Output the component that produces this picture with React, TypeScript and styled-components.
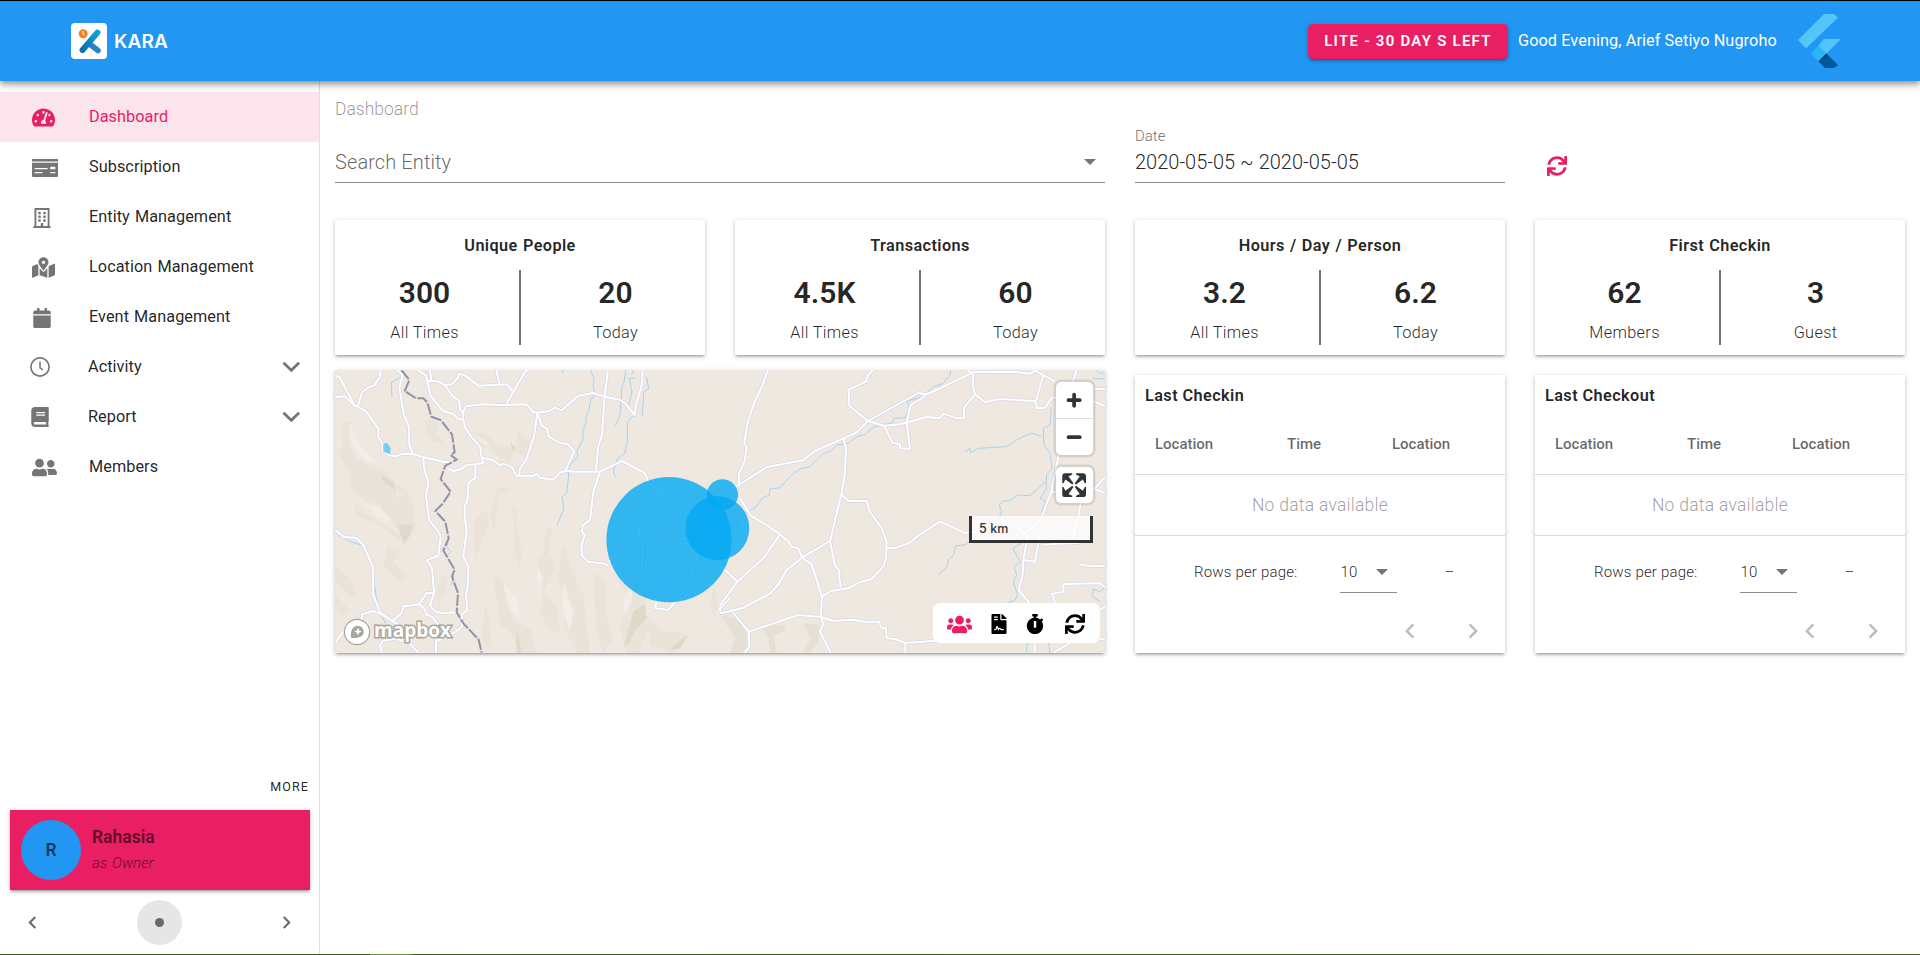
import React from "react";
import styled, { createGlobalStyle, css } from "styled-components";
import {
  FaSync,
  FaTachometerAlt,
  FaMoneyCheck,
  FaMapMarkedAlt,
  FaCalendar,
  FaBook,
  FaUserFriends,
  FaUsers,
  FaRegBuilding,
  FaStopwatch,
  FaFileContract,
} from "react-icons/fa";

const color = {
  primary: "#2196f3",
  accent: "#e91e63",
  text: "rgba(0, 0, 0, 0.87)",
  secondary: "rgba(0, 0, 0, 0.6)",
  divider: "rgba(0, 0, 0, 0.14)",
  icon: "#757575",
};

const elevation = css`
  box-shadow: 0 3px 2px -2px rgba(0, 0, 0, 0.2), 0 2px 3px rgba(0, 0, 0, 0.16),
    0 1px 6px rgba(0, 0, 0, 0.13);
`;

const GlobalStyle = createGlobalStyle`
  * { box-sizing: border-box; }
  body {
    margin: 0;
    background: #fff;
    color: ${color.text};
    font-family: Roboto, "Liberation Sans", sans-serif;
    font-size: 16.25px;
    overflow: hidden;
  }
  svg { display: block; }
  button { font: inherit; color: inherit; border: 0; background: none; padding: 0; }
`;

/* ---------- shell ---------- */

const Page = styled.div`
  display: flex;
  flex-direction: column;
  width: 1920px;
  height: 955px;
`;

const AppBar = styled.header`
  display: flex;
  align-items: center;
  flex: 0 0 81px;
  padding: 0 79px 0 71px;
  border-top: 1px solid #000;
  background: ${color.primary};
  color: #fff;
  z-index: 2;
  box-shadow: 0 2px 5px -1px rgba(0, 0, 0, 0.3), 0 5px 6px rgba(0, 0, 0, 0.16),
    0 1px 12px rgba(0, 0, 0, 0.14);
`;

const Brand = styled.div`
  display: flex;
  align-items: center;
  gap: 7px;
  margin-right: auto;
  font-family: Inter, Roboto, sans-serif;
  font-size: 19px;
  font-weight: 600;
  letter-spacing: 0.1px;
`;

const LogoTile = styled.div`
  width: 36px;
  height: 36px;
  border-radius: 4px;
  background: #fff;
`;

const PlanButton = styled.button`
  width: 200px;
  height: 35px;
  margin: 0 10px 0 0;
  border-radius: 5px;
  background: ${color.accent};
  font-size: 15px;
  font-weight: 600;
  letter-spacing: 1.25px;
  ${elevation}
`;

const Greeting = styled.span`
  width: 280px;
  font-weight: 450;
  letter-spacing: 0.09px;
  padding-bottom: 1px;
`;

const Body = styled.div`
  display: flex;
  flex: 1;
  min-height: 0;
`;

const BottomEdge = styled.div`
  flex: 0 0 1px;
  background: linear-gradient(
    90deg,
    #3b5414 370px,
    #6f8f38 370px,
    #6f8f38 410px,
    #3b5414 415px,
    #4a5428
  );
`;

/* ---------- sidebar ---------- */

const Sidebar = styled.aside`
  display: flex;
  flex-direction: column;
  flex: 0 0 320px;
  padding-top: 11px;
  border-right: 1px solid #dedede;
`;

const NavItem = styled.a<{ $active?: boolean; $group?: boolean }>`
  display: flex;
  align-items: center;
  height: 50px;
  padding: 0 18px 1px ${(p) => (p.$group ? 30 : 32)}px;
  letter-spacing: 0.06px;
  word-spacing: 1px;
  color: ${(p) => (p.$active ? color.accent : color.text)};
  background: ${(p) => (p.$active ? "#fbe4ec" : "transparent")};
  > svg:first-child {
    position: relative;
    top: ${(p) => (p.$group ? 0 : 1)}px;
    color: ${(p) => (p.$active ? color.accent : color.icon)};
  }
`;

const NavLabel = styled.span<{ $iconWidth: number }>`
  margin-left: ${(p) => 57 - p.$iconWidth}px;
  flex: 1;
`;

const SidebarFoot = styled.div`
  display: flex;
  flex-direction: column;
  margin-top: auto;
  padding: 0 9px 9px 10px;
`;

const MoreButton = styled.button`
  align-self: flex-end;
  margin: 0 1px 15px 0;
  line-height: 16px;
  font-size: 12.5px;
  letter-spacing: 1.1px;
`;

const ProfileCard = styled.div`
  display: flex;
  align-items: center;
  height: 80px;
  padding-left: 11px;
  background: ${color.accent};
  color: ${color.secondary};
  ${elevation}
`;

const Avatar = styled.div`
  display: grid;
  place-items: center;
  width: 60px;
  height: 60px;
  margin-right: 11px;
  border-radius: 50%;
  background: ${color.primary};
  font-size: 17.5px;
  font-weight: 600;
`;

const ProfileName = styled.div`
  font-size: 17.5px;
  font-weight: 600;
  line-height: 26px;
`;

const ProfileRole = styled.div`
  font-size: 15px;
  font-style: italic;
  font-weight: 350;
  letter-spacing: 0.1px;
  word-spacing: 1px;
  line-height: 26px;
`;

const Pager = styled.div`
  display: flex;
  align-items: center;
  justify-content: space-between;
  margin-top: 10px;
  padding: 0 11px 0 10px;
  color: #6b6b6b;
`;

const PagerDot = styled.div`
  display: grid;
  place-items: center;
  width: 45px;
  height: 45px;
  border-radius: 50%;
  background: #e6e6e6;
  &::after {
    content: "";
    width: 9px;
    height: 9px;
    border-radius: 50%;
    background: #696969;
  }
`;

/* ---------- main area ---------- */

const Main = styled.main`
  flex: 1;
  display: flex;
  flex-direction: column;
  padding: 17px 15px 0;
`;

const Breadcrumb = styled.div`
  font-size: 17.5px;
  font-weight: 350;
  line-height: 22px;
  color: rgba(0, 0, 0, 0.42);
`;

const Grid = styled.div`
  display: grid;
  grid-template-columns: repeat(4, 370px);
  column-gap: 30px;
`;

const Filters = styled(Grid)`
  margin-top: 4px;
  align-items: end;
`;

const Field = styled.div<{ $wide?: boolean }>`
  grid-column: span ${(p) => (p.$wide ? 2 : 1)};
  display: flex;
  flex-direction: column;
  justify-content: flex-end;
  height: 59px;
  border-bottom: 1px solid #8c8c8c;
  font-size: 20px;
  font-weight: 350;
`;

const FieldLabel = styled.label`
  font-size: 15px;
  line-height: 18px;
  color: ${color.secondary};
`;

const FieldValue = styled.div<{ $muted?: boolean }>`
  display: flex;
  align-items: center;
  justify-content: space-between;
  height: 37px;
  padding: 0 9px 3px 0;
  letter-spacing: ${(p) => (p.$muted ? 0.1 : 0)}px;
  color: ${(p) => (p.$muted ? "rgba(0,0,0,.62)" : color.text)};
`;

const Caret = styled.i`
  border: 6px solid transparent;
  border-top-color: ${color.icon};
  border-bottom: 0;
`;

const RefreshButton = styled.button`
  justify-self: start;
  margin: 0 0 7px 12px;
  color: ${color.accent};
`;

const Stats = styled(Grid)`
  margin-top: 37px;
`;

const Card = styled.section`
  background: #fff;
  ${elevation}
`;

const StatCard = styled(Card)`
  height: 135px;
  padding-top: 15px;
`;

const StatTitle = styled.h3`
  margin: 0 0 13px;
  text-align: center;
  font-size: 16.25px;
  font-weight: 600;
  line-height: 22px;
  letter-spacing: 0.4px;
  word-spacing: 0.8px;
`;

const StatPair = styled.div`
  display: grid;
  grid-template-columns: 186px 184px;
  height: 75px;
`;

const StatCell = styled.div`
  display: flex;
  flex-direction: column;
  align-items: center;
  font-weight: 350;
  letter-spacing: 0.36px;
  &:first-child {
    padding-right: 5px;
    border-right: 2px solid #757575;
  }
  &:last-child {
    padding-left: 5px;
  }
`;

const StatValue = styled.strong`
  font-size: 30px;
  font-weight: 600;
  line-height: 46px;
  letter-spacing: 0;
`;

const StatLabel = styled.span`
  line-height: 20px;
  padding-top: 7px;
`;

const Panels = styled(Grid)`
  margin-top: 15px;
  align-items: end;
`;

/* ---------- map ---------- */

const MapCard = styled(Card)`
  position: relative;
  grid-column: span 2;
  height: 283px;
`;

const MapControls = styled.div`
  position: absolute;
  top: 12px;
  right: 12px;
  display: flex;
  flex-direction: column;
  align-items: flex-end;
  gap: 12px;
`;

const ControlGroup = styled.div`
  border-radius: 5px;
  background: #fff;
  box-shadow: 0 0 0 2.5px rgba(0, 0, 0, 0.1);
`;

const ControlButton = styled.button`
  display: block;
  width: 37px;
  height: 36px;
  & + & {
    height: 37px;
    border-top: 1px solid #ddd;
  }
  svg {
    width: 36.25px;
    height: 36.25px;
    fill: #333;
  }
`;

const MapScale = styled.div`
  width: 124px;
  height: 27px;
  margin-top: 1px;
  padding: 5px 7px;
  border: 3px solid #333;
  border-top: 0;
  background: rgba(255, 255, 255, 0.75);
  color: #333;
  font-family: Inter, "Liberation Sans", sans-serif;
  font-size: 12.5px;
  font-weight: 500;
  line-height: 16px;
  letter-spacing: 0.1px;
`;

const MapTools = styled.div`
  position: absolute;
  right: 5px;
  bottom: 10px;
  display: flex;
  align-items: center;
  width: 167px;
  height: 40px;
  padding: 2px 0 0 14px;
  border-radius: 7px;
  background: #fff;
  color: #000;
  svg:first-child {
    color: ${color.accent};
  }
  svg:nth-child(2) {
    margin: 0 16px 0 17px;
  }
  svg:nth-child(3) {
    margin-right: 20px;
  }
`;

const MapLogo = styled.div`
  position: absolute;
  left: 8px;
  bottom: 7px;
  display: flex;
  align-items: center;
  gap: 3px;
  color: #fff;
  font-family: "Open Sans", sans-serif;
  font-size: 19px;
  font-weight: 700;
  line-height: 24px;
  paint-order: stroke fill;
  -webkit-text-stroke: 3px #a8a69f;
  span {
    padding-bottom: 4px;
  }
`;

/* ---------- tables ---------- */

const TableCard = styled(Card)`
  height: 278px;
  display: flex;
  flex-direction: column;
`;

const TableTitle = styled.h3`
  margin: 0;
  padding: 10px 10px 0;
  font-size: 16.25px;
  font-weight: 600;
  line-height: 22px;
  letter-spacing: 0.42px;
`;

const TableHead = styled.div`
  display: grid;
  grid-template-columns: 132px 105px 1fr;
  align-items: center;
  height: 68px;
  padding: 6px 0 0 20px;
  border-bottom: 1px solid ${color.divider};
  font-size: 15px;
  font-weight: 550;
  color: ${color.secondary};
`;

const EmptyRow = styled.div`
  display: grid;
  place-items: center;
  height: 61px;
  border-bottom: 1px solid ${color.divider};
  font-size: 17.5px;
  font-weight: 350;
  letter-spacing: 0.26px;
  color: rgba(0, 0, 0, 0.4);
`;

const TableFoot = styled.div`
  display: flex;
  align-items: center;
  height: 58px;
  margin-top: 7px;
  padding-left: 59px;
  font-size: 15px;
  font-weight: 350;
  letter-spacing: 0.18px;
`;

const RowsSelect = styled.div`
  display: flex;
  align-items: center;
  justify-content: space-between;
  width: 57px;
  height: 42px;
  margin: 0 47px 0 43px;
  padding: 1px 9px 0 0;
  border-bottom: 1px solid #8c8c8c;
`;

const PageArrows = styled.div`
  display: flex;
  gap: 33px;
  padding: 15px 17px 0 0;
  justify-content: flex-end;
  color: rgba(0, 0, 0, 0.26);
`;

/* ---------- drawings ---------- */

function KaraMark() {
  return (
    <svg width="36" height="36" viewBox="0 0 36 36">
      <defs>
        <linearGradient id="kara-blue" x1="1" y1="0" x2="0" y2="1">
          <stop offset="0" stopColor="#0aa2dc" />
          <stop offset="1" stopColor="#0b6fae" />
        </linearGradient>
      </defs>
      <path d="M18 20.5 27 27.5" stroke="#2a83c4" strokeWidth="5.6" strokeLinecap="round" />
      <path d="M11.5 27 26.5 9.5" stroke="url(#kara-blue)" strokeWidth="5.8" strokeLinecap="round" />
      <circle cx="12.2" cy="10.8" r="4.5" fill="#f58220" />
      <path d="M12 8.2v3l1.4 1.2" stroke="#fff" strokeWidth="1" fill="none" />
    </svg>
  );
}

function FlutterMark() {
  return (
    <svg width="43" height="54" viewBox="0 0 43 54">
      <path d="M26 0h10l4 3.5L8 34.5 0 26z" fill="#54c5f8" />
      <path d="M26 25h17L27.5 40.5 19 33z" fill="#54c5f8" />
      <path d="M12.5 39.5 20.5 31.5 28.5 39.5 20.5 47.5z" fill="#29b6f6" />
      <path d="M20.5 47.5 28.5 39.5 40 51l-4 3H27z" fill="#01579b" />
      <path d="M20.5 47.5 28.5 39.5 29 43z" fill="#063a66" />
    </svg>
  );
}

function ClockIcon() {
  return (
    <svg width="20" height="20" viewBox="0 0 20 20" fill="none" stroke="currentColor">
      <circle cx="10" cy="10" r="9.1" strokeWidth="1.6" />
      <path d="M10 4.5v6.4l3 2.1" strokeWidth="1.5" />
    </svg>
  );
}

function Chevron({ dir, size = 25 }: { dir: "left" | "right"; size?: number }) {
  const d =
    dir === "left"
      ? "M15.41 16.58 10.83 12l4.58-4.59L14 6l-6 6 6 6z"
      : "M8.59 16.58 13.17 12 8.59 7.41 10 6l6 6-6 6z";
  return (
    <svg width={size} height={size} viewBox="0 0 24 24" fill="currentColor">
      <path d={d} />
    </svg>
  );
}

function ChevronDown() {
  return (
    <svg width="19" height="12" viewBox="0 0 19 12" fill="none" stroke={color.icon} strokeWidth="2.8">
      <path d="M1.5 1.8 9.3 9.2 17.1 1.8" />
    </svg>
  );
}

/* Map geometry: two sheets, drawn at three units to the pixel. */
const westRoads = [
  "M15 97 46 94 75 124 28 35 15 32M75 124 84 122 96 82 114 68 132 61 150 36 152 10",
  "M80 124 108 139 130 170 145 190 145 215 158 236 158 258 180 272 200 274 218 266 250 268 280 276 342 291 362 291",
  "M200 14 218 30 208 68 222 150 237 185 238 240 250 268",
  "M262 14 288 32 295 60 302 92 320 115 340 138 368 146 385 162 400 164",
  "M300 14 304 47M290 47 320 48 345 60 366 92 388 108 390 132 400 145",
  "M345 60 366 58 384 38 386 26 406 32 445 62 530 58 547 78M498 10 508 58",
  "M607 10 585 20 530 115",
  "M400 164 400 140 408 124 460 118 520 120 590 118 608 140 622 143 658 138 674 128 695 136 745 92 790 84 825 95 870 104 888 118 914 150 918 118 930 80 937 50 937 14",
  "M400 164 405 185 425 218 450 244 455 278 488 284 510 302 520 296 546 306 558 332 612 332 618 326 630 338 670 344 690 322 715 317 728 320 810 320 876 288 944 324 955 350 985 380",
  "M455 278 460 294 436 298 410 300 395 312 372 318 355 312",
  "M436 298 436 340 416 352 412 410 404 422 404 455 410 500 400 575 416 605 412 670 408 690 412 735 396 748",
  "M280 276 282 310 295 352 288 390 297 465 325 500 332 512 325 574 304 580 290 586 306 608 312 684 300 722 318 742 346 744 378 742",
  "M312 684 290 684 268 718 222 724 212 748 186 768M268 718 284 732 288 748 305 755 330 785",
  "M15 494 42 516 78 518 100 540 128 605 130 690 150 742 186 768 205 778 240 838 265 863",
  "M186 768 150 745 128 738 96 748 96 760 60 780 40 800 18 830",
  "M396 748 396 785 375 802 318 828 318 863M240 800 215 828 200 820 158 828 150 842 156 863",
  "M622 143 635 182 652 192 656 214 690 234 712 238 733 258 706 318",
  "M622 143 612 215 588 285 570 310 568 330",
  "M834 14 824 95 816 210 804 246 798 320",
  "M810 320 790 380 780 465 758 482 756 500 764 510 754 545 756 572 774 590 826 596 836 604",
];
const shadedRoads = [
  "M985 380 940 450 925 500 940 550 935 610 968 630 950 680 980 710 975 730 1015 735 1085 650 1085 620 1110 560",
  "M985 380 1060 400 1100 405 1160 500M1160 500 1050 522 1010 528 980 620M836 590 880 550 920 520",
  "M1200 700 1168 732 1175 745 1200 740M1180 560 1200 580M1165 605 1200 630",
];
const eastRoads = [
  "M144 14 128 60 103 112 84 168 72 235 80 244 74 290 58 322 56 360",
  "M0 388 56 360 140 306 250 286 285 258 370 220 410 202 444 168 595 84 615 88 630 84 752 26 745 14",
  "M595 84 615 88 612 96 572 120 560 172 570 252 540 250 540 236 518 234 492 182",
  "M462 12 444 30 438 50 386 74 388 122 444 168 492 182 540 178 620 156 658 160 670 146 712 160 732 160 732 128 765 88 758 60 760 26",
  "M752 22 880 20 930 26 950 14M765 88 795 112 840 102 945 108 952 130 975 128 996 98 1060 90",
  "M940 14 970 30 1005 50M970 30 948 108M1070 14 1058 52M1120 108 1157 124M1125 72 1157 72",
  "M370 220 378 250 374 330 364 388 330 528 344 600 360 620 356 622 362 668",
  "M364 388 386 408 440 408 448 438 485 490 500 530 498 575 492 602 455 642 422 650 390 668 334 678 306 694",
  "M500 550 522 550 568 534 600 508 660 470 735 504 770 500 830 470 875 470 912 505",
  "M92 452 140 480 180 508 206 530 214 545 235 550 246 578 275 598 306 694 302 752 310 778 300 800 332 863",
  "M330 528 246 578 200 615 174 660 150 686 70 728 4 745 0 740",
  "M180 508 130 580 52 650 0 600M52 650 0 722",
  "M38 742 86 800 235 750 302 756 340 768 400 764 432 770 478 770 482 786 498 792 500 820 526 822 556 834 720 822M556 834 556 863M86 800 88 845 74 863",
  "M60 400 92 452",
  "M1016 270 994 380 960 470 912 505 922 514 910 585 945 590 960 510M994 380 1070 378",
  "M1082 414 1074 460 1058 522M1122 372 1157 335M1122 372 1157 384M970 540 1010 536 1078 534",
  "M910 585 908 630 896 675 928 714M1157 602 1110 604 1078 598M1157 668 1140 655 1070 656 1030 658 1030 680 996 686 1006 714",
  "M1140 735 1157 722M1140 822 1157 824M944 834 944 863M1000 863 1050 834",
];
const westStreams = [
  "M215 35 184 52 186 95M15 500 50 525 95 542M124 590 134 660 140 705M150 740 168 780M355 532 350 545 362 560 352 570M372 630 364 660",
  "M780 14 792 40 790 70 798 85 782 105 776 140 766 160 770 170 758 200 760 220 740 260 744 275 722 298 712 315 716 330 710 385 696 395 702 430 682 478",
  "M888 14 882 50 876 64 870 150 856 182M915 40 898 40 906 80 894 128 912 150 892 170 892 230 884 265 862 282 850 320 856 335M912 14 904 30",
  "M950 36 956 72 942 80 936 155M698 14 698 22",
];
const eastStreams = [
  "M85 440 110 425 125 400 148 390 150 372 180 368 215 330 240 312 270 305 310 265 330 260 350 240 385 235 410 215 435 208 462 186 520 172 522 160 555 158 568 130 562 108 605 96 640 65 670 55 690 30 692 14",
  "M735 260 750 250 752 262 775 250 860 245 890 225 925 208 940 205 965 215M994 128 990 180 970 190 972 240 990 265 996 310 980 330 978 375 960 400 978 410 965 440 965 470 938 480 920 505",
  "M978 350 950 375 930 392 895 390 870 406 845 410 838 420 845 440 832 470M750 528 735 540 708 542 700 572 685 585 682 605 655 630",
  "M920 510 912 530 878 550 892 575 902 590 882 605 890 630 880 650 892 690 886 705 860 714M1128 14 1138 24 1152 24M1118 40 1140 42 1157 38M1157 665 1140 680 1120 672 1118 695 1140 710M922 834 918 863M985 834 990 863",
  "M50 490 62 450 85 440",
];
const hills = [
  "M38 172 60 170 54 212 62 245 80 280 118 300 160 318 195 345 200 400 240 450 256 470 252 500 220 545 210 500 160 448 150 420 110 410 60 370 60 325 20 255 40 250 34 215z",
  "M70 400 100 440 160 478 212 510 212 530 130 470 80 452z",
  "M200 352 235 380 255 440 240 470 205 400zM150 340 190 380 215 420 170 400z",
  "M432 200 470 208 500 235 530 240 552 262 540 290 510 280 490 258 452 240zM560 190 600 230 590 275 560 262z",
  "M280 165 305 162 330 182 320 205 345 240 310 230 290 200z",
  "M500 370 540 368 542 380 506 385 504 430 492 500 480 450zM545 420 562 440 560 490 575 560 568 615 552 560 552 480zM650 490 664 490 656 560 680 600 640 680 618 600 640 560z",
  "M435 468 470 430 478 480 455 530 440 580 430 540z",
  "M170 545 208 560 208 575 190 590 235 640 210 650 160 602z",
  "M488 625 520 650 530 720 560 770 600 790 620 863 570 863 540 800 510 780 500 700zM640 680 680 730 690 800 660 800 630 740zM700 540 720 600 760 690 780 863 740 863 700 780 720 720 680 640z",
  "M15 600 60 640 85 700 60 690 15 650zM15 690 60 735 40 750 15 735z",
  "M790 620 826 650 830 760 850 820 820 863 800 800zM860 640 890 580 930 560 950 620 960 680 930 740 955 790 930 863 890 863 870 780 900 700z",
  "M950 750 1000 800 1050 800 1080 820 1020 863 960 840zM1150 640 1165 720 1155 760 1140 730z",
  "M465 720 455 830 485 850 480 760zM340 630 355 640 345 690 325 720 322 660z",
];
const darkHills = [
  "M205 478 250 480 240 505 225 535 212 510zM150 330 192 352 200 376 160 350zM910 740 945 715 950 760 920 790 900 830 880 850zM1020 850 1075 808 1050 850 1030 856z",
  "M540 230 560 250 548 262zM560 790 575 863 560 863zM510 285 540 300 520 298z",
];
const lightHills = [
  "M60 180 90 240 140 290 110 290 70 250zM110 420 150 428 190 470 140 455zM440 210 470 230 480 250 450 232zM520 660 560 700 570 760 540 730zM700 650 730 740 720 800 700 740zM880 700 910 650 905 710 885 750zM620 600 640 640 625 670z",
];

const Sheet = ({ roads, streams, x }: { roads: string[]; streams: string[]; x: number }) => (
  <g transform={`translate(${x} -5) scale(0.33333)`} fill="none" strokeLinejoin="round">
    <path d={streams.join("")} stroke="#a5d3ee" strokeWidth="3" />
    <path d={roads.join("")} stroke="#d5d6e6" strokeWidth="10" />
    <path d={roads.join("")} stroke="#fff" strokeWidth="6" />
  </g>
);

function BaseMap() {
  return (
    <svg width="770" height="283" viewBox="0 0 770 283">
      <rect width="770" height="283" fill="#efe8e1" />
      <g transform="translate(-5 -5) scale(0.33333)">
        <path d={hills.join("")} fill="#e9e3d9" />
        <path d={darkHills.join("")} fill="#dfd9ca" />
        <path d={lightHills.join("")} fill="#f2ede6" />
        <path
          d="M1170 750 1225 760 1250 800 1250 850 1230 863 1200 863 1215 820zM1290 786 1370 780 1360 800 1330 810 1340 863 1320 863 1315 815zM1420 775 1468 780 1465 830 1440 863 1420 863 1440 820z"
          fill="#e6e0d4"
        />
      </g>
      <Sheet roads={[...westRoads, ...shadedRoads]} streams={westStreams} x={-5} />
      <Sheet roads={eastRoads} streams={eastStreams} x={385} />
      <g transform="translate(-5 -5) scale(0.33333)" fill="none">
        <path d="M160 236 172 234 182 250 180 268 160 260z" fill="#74cdf2" />
        <path
          d="M215 16 238 45 224 78 258 100 280 100 292 112 304 155 332 165 366 208 374 262 362 270 380 284 346 302 332 342 362 380 338 416 316 438 346 470 356 520 340 556 374 614 366 634 384 684 380 742 400 775 446 824 455 863"
          stroke="#9094a8"
          strokeWidth="6"
          strokeDasharray="34 5"
        />
      </g>
      <g fill="#03a9f4" fillOpacity="0.8">
        <circle cx="334" cy="169.7" r="62.6" />
        <circle cx="387.4" cy="124.8" r="15.6" />
        <circle cx="382.3" cy="158.3" r="32" />
      </g>
    </svg>
  );
}

function MapboxMark() {
  return (
    <svg width="28" height="28" viewBox="0 0 28 28">
      <circle cx="14" cy="14" r="12" fill="#fff" stroke="#a8a69f" strokeWidth="2.4" />
      <path d="M8 19.8C7.3 13 9.5 7.8 14.8 7.8a6 6 0 0 1 6 6c0 5-6 7-12.8 6z" fill="#a8a69f" />
      <path d="m15 9.8 1.1 2.7 2.7 1.1-2.7 1.1L15 17.4l-1.1-2.7-2.7-1.1 2.7-1.1z" fill="#fff" />
    </svg>
  );
}

const plusPath =
  "M14.5 8.5c-.75 0-1.5.75-1.5 1.5v3h-3c-.75 0-1.5.75-1.5 1.5S9.25 16 10 16h3v3c0 .75.75 1.5 1.5 1.5S16 19.75 16 19v-3h3c.75 0 1.5-.75 1.5-1.5S19.75 13 19 13h-3v-3c0-.75-.75-1.5-1.5-1.5z";
const minusPath =
  "M10 13c-.75 0-1.5.75-1.5 1.5S9.25 16 10 16h9c.75 0 1.5-.75 1.5-1.5S19.75 13 19 13h-9z";
const fullscreenPath =
  "M24 16v5.5c0 1.75-.75 2.5-2.5 2.5H16v-1l3-1.5-4-5.5 1-1 5.5 4 1.5-3h1zM6 16l1.5 3 5.5-4 1 1-4 5.5 3 1.5v1H7.5C5.75 24 5 23.25 5 21.5V16h1zm7-11v1l-3 1.5 4 5.5-1 1-5.5-4L6 13H5V7.5C5 5.75 5.75 5 7.5 5H13zm11 2.5c0-1.75-.75-2.5-2.5-2.5H16v1l3 1.5-4 5.5 1 1 5.5-4 1.5 3h1V7.5z";

const Glyph = ({ d }: { d: string }) => (
  <svg viewBox="0 0 29 29">
    <path d={d} />
  </svg>
);

/* ---------- content ---------- */

const nav = [
  { label: "Dashboard", icon: <FaTachometerAlt size={23} />, w: 23, active: true },
  { label: "Subscription", icon: <FaMoneyCheck size={26} />, w: 26 },
  { label: "Entity Management", icon: <FaRegBuilding size={20} />, w: 20 },
  { label: "Location Management", icon: <FaMapMarkedAlt size={23} />, w: 23 },
  { label: "Event Management", icon: <FaCalendar size={20} />, w: 20 },
  { label: "Activity", icon: <ClockIcon />, w: 19, group: true },
  { label: "Report", icon: <FaBook size={20} />, w: 19, group: true },
  { label: "Members", icon: <FaUserFriends size={25} />, w: 25 },
];

const stats = [
  { title: "Unique People", cells: [["300", "All Times"], ["20", "Today"]] },
  { title: "Transactions", cells: [["4.5K", "All Times"], ["60", "Today"]] },
  { title: "Hours / Day / Person", cells: [["3.2", "All Times"], ["6.2", "Today"]] },
  { title: "First Checkin", cells: [["62", "Members"], ["3", "Guest"]] },
];

function CheckTable({ title }: { title: string }) {
  return (
    <TableCard>
      <TableTitle>{title}</TableTitle>
      <TableHead>
        <span>Location</span>
        <span>Time</span>
        <span>Location</span>
      </TableHead>
      <EmptyRow>No data available</EmptyRow>
      <TableFoot>
        <span>Rows per page:</span>
        <RowsSelect>
          10 <Caret />
        </RowsSelect>
        <span>–</span>
      </TableFoot>
      <PageArrows>
        <Chevron dir="left" size={30} />
        <Chevron dir="right" size={30} />
      </PageArrows>
    </TableCard>
  );
}

export default function App() {
  return (
    <Page>
      <GlobalStyle />
      <AppBar>
        <Brand>
          <LogoTile>
            <KaraMark />
          </LogoTile>
          KARA
        </Brand>
        <PlanButton>LITE - 30 DAY S LEFT</PlanButton>
        <Greeting>Good Evening, Arief Setiyo Nugroho</Greeting>
        <FlutterMark />
      </AppBar>
      <Body>
        <Sidebar>
          {nav.map((n) => (
            <NavItem key={n.label} $active={n.active} $group={n.group}>
              {n.icon}
              <NavLabel $iconWidth={n.w}>{n.label}</NavLabel>
              {n.group && <ChevronDown />}
            </NavItem>
          ))}
          <SidebarFoot>
            <MoreButton>MORE</MoreButton>
            <ProfileCard>
              <Avatar>R</Avatar>
              <div>
                <ProfileName>Rahasia</ProfileName>
                <ProfileRole>as Owner</ProfileRole>
              </div>
            </ProfileCard>
            <Pager>
              <Chevron dir="left" />
              <PagerDot />
              <Chevron dir="right" />
            </Pager>
          </SidebarFoot>
        </Sidebar>
        <Main>
          <Breadcrumb>Dashboard</Breadcrumb>
          <Filters>
            <Field $wide>
              <FieldValue $muted>
                Search Entity <Caret />
              </FieldValue>
            </Field>
            <Field>
              <FieldLabel>Date</FieldLabel>
              <FieldValue>2020-05-05 ~ 2020-05-05</FieldValue>
            </Field>
            <RefreshButton>
              <FaSync size={20} />
            </RefreshButton>
          </Filters>
          <Stats>
            {stats.map((s) => (
              <StatCard key={s.title}>
                <StatTitle>{s.title}</StatTitle>
                <StatPair>
                  {s.cells.map(([value, label]) => (
                    <StatCell key={label}>
                      <StatValue>{value}</StatValue>
                      <StatLabel>{label}</StatLabel>
                    </StatCell>
                  ))}
                </StatPair>
              </StatCard>
            ))}
          </Stats>
          <Panels>
            <MapCard>
              <BaseMap />
              <MapControls>
                <ControlGroup>
                  <ControlButton>
                    <Glyph d={plusPath} />
                  </ControlButton>
                  <ControlButton>
                    <Glyph d={minusPath} />
                  </ControlButton>
                </ControlGroup>
                <ControlGroup>
                  <ControlButton>
                    <Glyph d={fullscreenPath} />
                  </ControlButton>
                </ControlGroup>
                <MapScale>5 km</MapScale>
              </MapControls>
              <MapLogo>
                <MapboxMark />
                <span>mapbox</span>
              </MapLogo>
              <MapTools>
                <FaUsers size={25} />
                <FaFileContract size={20} />
                <FaStopwatch size={20} />
                <FaSync size={20} />
              </MapTools>
            </MapCard>
            <CheckTable title="Last Checkin" />
            <CheckTable title="Last Checkout" />
          </Panels>
        </Main>
      </Body>
      <BottomEdge />
    </Page>
  );
}
